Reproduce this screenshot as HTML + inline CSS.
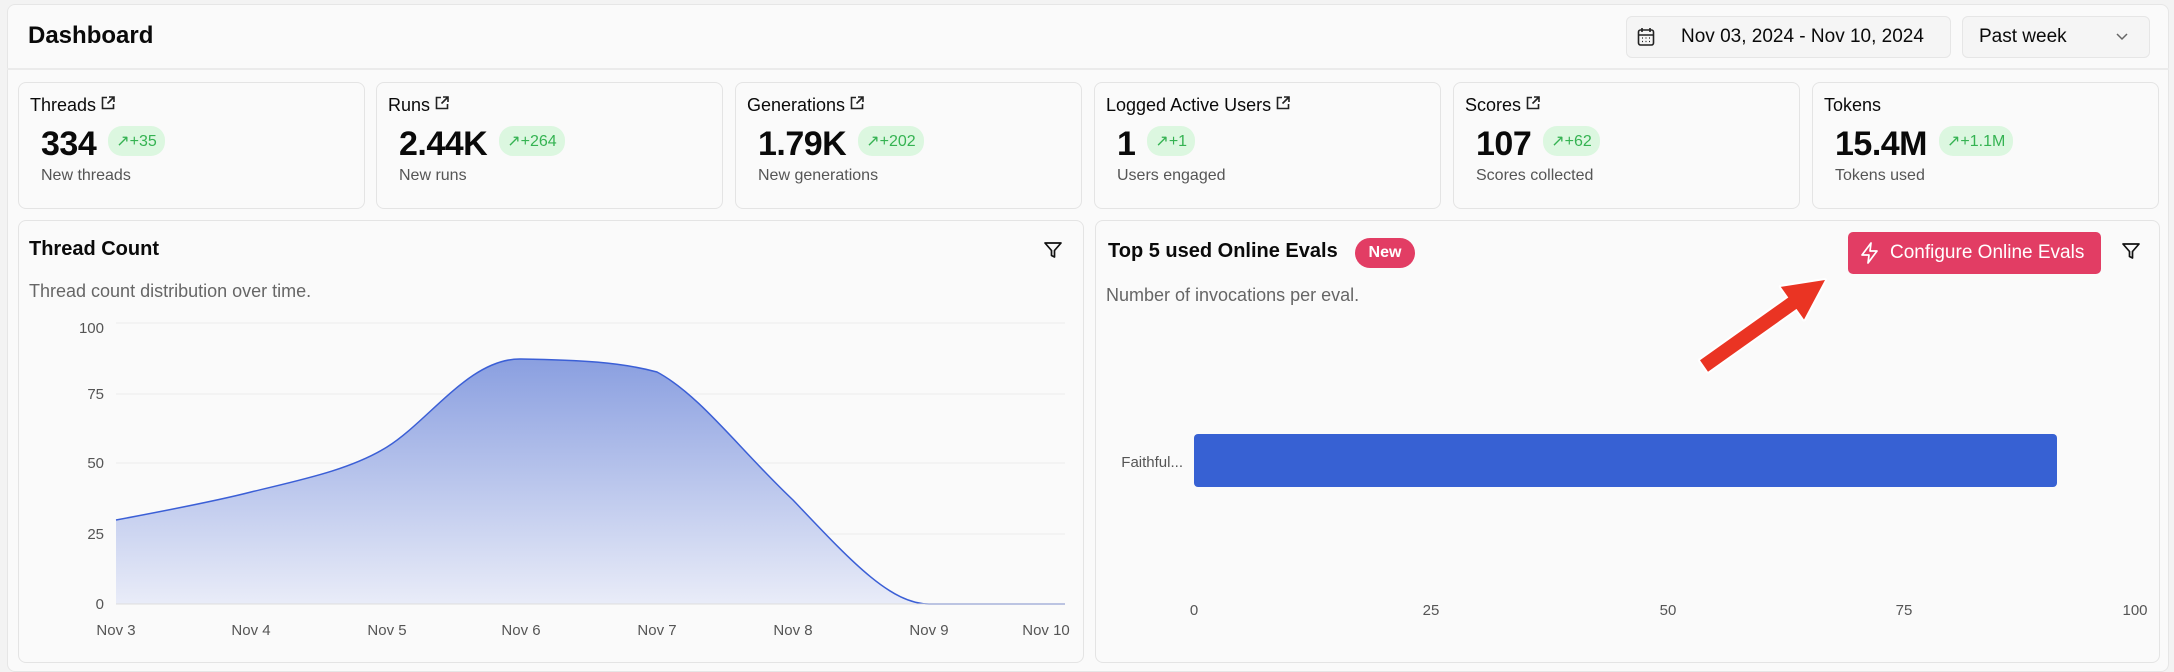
<!DOCTYPE html>
<html><head><meta charset="utf-8"><style>
*{margin:0;padding:0;box-sizing:border-box}
body{width:2174px;height:668px;background:#f3f3f3;font-family:"Liberation Sans",sans-serif;position:relative;overflow:hidden;color:#0a0a0a}
.a{position:absolute}
.frame{left:7px;top:4px;width:2162px;height:668px;background:#fafafa;border:1px solid #e6e6e6;border-radius:8px}
.card{position:absolute;top:82px;width:347px;height:127px;background:#fafafa;border:1.5px solid #e4e4e4;border-radius:8px}
.card .t{position:absolute;left:11px;top:12px;font-size:18px}
.card .n{position:absolute;left:22px;top:42px;font-size:34px;font-weight:bold;letter-spacing:-0.5px}
.card .b{display:inline-block;vertical-align:middle;margin-left:12px;position:relative;top:-5px;background:#dcf7e0;color:#35b352;font-size:16px;font-weight:normal;border-radius:14px;padding:5px 8px;letter-spacing:0}
.card .s{position:absolute;left:22px;top:84px;font-size:16px;color:#555}
.ext{display:inline-block;width:14px;height:14px;margin-left:5px;vertical-align:1px}
.big{position:absolute;top:220px;height:443px;background:#fafafa;border:1.5px solid #e4e4e4;border-radius:8px}
</style></head><body>
<div class="a frame"></div>
<div class="a" style="left:7px;top:68px;width:2162px;height:2px;background:#ebebeb"></div>
<div class="a" style="left:28px;top:22px;font-size:24px;font-weight:bold">Dashboard</div>
<div class="a" style="left:1626px;top:16px;width:325px;height:42px;border:1px solid #e6e6e6;border-radius:6px;background:#f5f5f5"></div>
<svg class="a" style="left:1637px;top:27px" width="18" height="20" viewBox="0 0 18 20" fill="none" stroke="#222" stroke-width="1.6"><rect x="1.5" y="3" width="15" height="15" rx="2"/><path d="M5 1v4M13 1v4M1.5 8h15"/><path d="M5 11h1M8.5 11h1M12 11h1M5 14.5h1M8.5 14.5h1M12 14.5h1" stroke-width="1.3"/></svg>
<div class="a" style="left:1681px;top:26px;font-size:19px">Nov 03, 2024 - Nov 10, 2024</div>
<div class="a" style="left:1962px;top:16px;width:188px;height:42px;border:1px solid #e6e6e6;border-radius:6px;background:#f5f5f5"></div>
<div class="a" style="left:1979px;top:26px;font-size:19px">Past week</div>
<svg class="a" style="left:2115px;top:32px" width="14" height="10" viewBox="0 0 14 10" fill="none" stroke="#666" stroke-width="1.5"><path d="M2 2l5 5 5-5"/></svg>

<div class="card" style="left:18px"><div class="t">Threads<svg class="ext" viewBox="0 0 14 14" fill="none" stroke="#222" stroke-width="1.6"><path d="M6 1.5H1.5v11h11V8M8 1h5v5M13 1L6.5 7.5"/></svg></div><div class="n">334<span class="b">↗+35</span></div><div class="s">New threads</div></div>
<div class="card" style="left:376px"><div class="t">Runs<svg class="ext" viewBox="0 0 14 14" fill="none" stroke="#222" stroke-width="1.6"><path d="M6 1.5H1.5v11h11V8M8 1h5v5M13 1L6.5 7.5"/></svg></div><div class="n">2.44K<span class="b">↗+264</span></div><div class="s">New runs</div></div>
<div class="card" style="left:735px"><div class="t">Generations<svg class="ext" viewBox="0 0 14 14" fill="none" stroke="#222" stroke-width="1.6"><path d="M6 1.5H1.5v11h11V8M8 1h5v5M13 1L6.5 7.5"/></svg></div><div class="n">1.79K<span class="b">↗+202</span></div><div class="s">New generations</div></div>
<div class="card" style="left:1094px"><div class="t">Logged Active Users<svg class="ext" viewBox="0 0 14 14" fill="none" stroke="#222" stroke-width="1.6"><path d="M6 1.5H1.5v11h11V8M8 1h5v5M13 1L6.5 7.5"/></svg></div><div class="n">1<span class="b">↗+1</span></div><div class="s">Users engaged</div></div>
<div class="card" style="left:1453px"><div class="t">Scores<svg class="ext" viewBox="0 0 14 14" fill="none" stroke="#222" stroke-width="1.6"><path d="M6 1.5H1.5v11h11V8M8 1h5v5M13 1L6.5 7.5"/></svg></div><div class="n">107<span class="b">↗+62</span></div><div class="s">Scores collected</div></div>
<div class="card" style="left:1812px"><div class="t">Tokens</div><div class="n">15.4M<span class="b">↗+1.1M</span></div><div class="s">Tokens used</div></div>

<div class="big" style="left:18px;width:1066px"></div>
<div class="big" style="left:1095px;width:1065px"></div>

<div class="a" style="left:29px;top:238px;font-size:20px;font-weight:bold">Thread Count</div>
<div class="a" style="left:29px;top:281px;font-size:18px;color:#666">Thread count distribution over time.</div>
<svg class="a" style="left:1043px;top:240px" width="20" height="20" viewBox="0 0 20 20" fill="none" stroke="#111" stroke-width="1.7" stroke-linejoin="round"><path d="M2 3h16l-6.5 7.5V17l-3-1.5v-5z"/></svg>
<svg class="a" style="left:0;top:0" width="2174" height="668">
<defs><linearGradient id="g" x1="0" y1="0" x2="0" y2="1"><stop offset="0" stop-color="#8a9fe0"/><stop offset="1" stop-color="#e9ecf8"/></linearGradient></defs>
<g stroke="#ececec" stroke-width="1"><path d="M116 323H1065M116 394H1065M116 463H1065M116 534H1065"/></g>
<path d="M116 520C180 508 220 500 251 492C300 480 350 470 387 447C430 420 470 358 521 359C580 360 620 362 657 372C700 395 740 450 793 500C850 560 890 604 929 604L1065 604V604H116Z" fill="url(#g)"/>
<path d="M116 520C180 508 220 500 251 492C300 480 350 470 387 447C430 420 470 358 521 359C580 360 620 362 657 372C700 395 740 450 793 500C850 560 890 604 929 604L1065 604" fill="none" stroke="#3b5fd6" stroke-width="1.5"/>
<path d="M116 604H1065" stroke="#ddd"/>
<g font-family="Liberation Sans" font-size="15" fill="#555" text-anchor="end"><text x="104" y="333">100</text><text x="104" y="399">75</text><text x="104" y="468">50</text><text x="104" y="539">25</text><text x="104" y="609">0</text></g>
<g font-family="Liberation Sans" font-size="15" fill="#555" text-anchor="middle"><text x="116" y="635">Nov 3</text><text x="251" y="635">Nov 4</text><text x="387" y="635">Nov 5</text><text x="521" y="635">Nov 6</text><text x="657" y="635">Nov 7</text><text x="793" y="635">Nov 8</text><text x="929" y="635">Nov 9</text><text x="1046" y="635">Nov 10</text></g>
<rect x="1194" y="434" width="863" height="53" rx="4" fill="#3761d3"/>
<g font-family="Liberation Sans" font-size="15" fill="#555" text-anchor="middle"><text x="1194" y="615">0</text><text x="1431" y="615">25</text><text x="1668" y="615">50</text><text x="1904" y="615">75</text><text x="2135" y="615">100</text></g>
<text x="1183" y="467" font-family="Liberation Sans" font-size="15" fill="#555" text-anchor="end">Faithful...</text>
</svg>

<div class="a" style="left:1108px;top:240px;font-size:20px;font-weight:bold">Top 5 used Online Evals</div>
<div class="a" style="left:1355px;top:238px;width:60px;height:30px;border-radius:15px;background:#e23d64;color:#fff;font-size:16px;font-weight:bold;text-align:center;line-height:30px">New</div>
<div class="a" style="left:1106px;top:285px;font-size:18px;color:#666">Number of invocations per eval.</div>
<div class="a" style="left:1848px;top:232px;width:253px;height:42px;border-radius:5px;background:#e23d64;color:#fff;font-size:19px;line-height:42px;padding-left:42px">Configure Online Evals</div>
<svg class="a" style="left:1860px;top:242px" width="20" height="22" viewBox="0 0 20 22" fill="none" stroke="#fff" stroke-width="1.7" stroke-linejoin="round"><path d="M11 1L2 13h7l-1 8 9-12h-7z"/></svg>
<svg class="a" style="left:2121px;top:241px" width="20" height="20" viewBox="0 0 20 20" fill="none" stroke="#111" stroke-width="1.7" stroke-linejoin="round"><path d="M2 3h16l-6.5 7.5V17l-3-1.5v-5z"/></svg>
<svg class="a" style="left:0;top:0" width="2174" height="668">
<path d="M1708 371.7L1796.5 308.9L1804 319.5L1825 280L1780.8 286.9L1788.3 297.5L1700 360.3Z" fill="#ea3423" stroke="#fff" stroke-width="4" stroke-linejoin="round" paint-order="stroke"/>
</svg>
</body></html>
